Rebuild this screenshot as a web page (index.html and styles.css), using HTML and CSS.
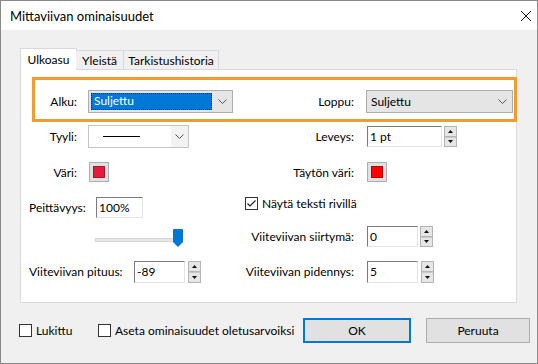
FILE: index.html
```html
<!DOCTYPE html>
<html lang="fi">
<head>
<meta charset="utf-8">
<title>Mittaviivan ominaisuudet</title>
<link rel="stylesheet" href="styles.css">
</head>
<body>
<div class="window">
  <div class="titlebar">
    <span class="title">Mittaviivan ominaisuudet</span>
    <svg class="close" width="12" height="12" viewBox="0 0 12 12"><path d="M1 1L11 11M11 1L1 11" stroke="#111" stroke-width="1" fill="none"/></svg>
  </div>
  <div class="content">
    <div class="tabs">
      <div class="tab active tab-ulkoasu">Ulkoasu</div>
      <div class="tab tab-yleista">Yleistä</div>
      <div class="tab tab-hist">Tarkistushistoria</div>
    </div>
    <div class="panel">
      <div class="highlight">
        <div class="hl-left">
          <span class="label lbl-alku">Alku:</span>
          <div class="combo combo-alku">
            <span class="combo-sel">Suljettu</span>
            <span class="chev"><svg width="9" height="5" viewBox="0 0 9 5"><path d="M0.5 0.5L4.5 4.5L8.5 0.5" stroke="#555" fill="none"/></svg></span>
          </div>
        </div>
        <div class="rcell">
          <span class="label lbl-right">Loppu:</span>
          <div class="combo combo-loppu">
            <span class="combo-text">Suljettu</span>
            <span class="chev"><svg width="9" height="5" viewBox="0 0 9 5"><path d="M0.5 0.5L4.5 4.5L8.5 0.5" stroke="#555" fill="none"/></svg></span>
          </div>
        </div>
      </div>

      <div class="row row-tyyli">
        <div class="lcell">
          <span class="label lbl-left">Tyyli:</span>
          <div class="combo combo-tyyli">
            <span class="line-sample"></span>
            <span class="chev chev-light"><svg width="9" height="5" viewBox="0 0 9 5"><path d="M0.5 0.5L4.5 4.5L8.5 0.5" stroke="#555" fill="none"/></svg></span>
          </div>
        </div>
        <div class="rcell">
          <span class="label lbl-right">Leveys:</span>
          <div class="input input-leveys">1 pt</div>
          <div class="spin">
            <div class="spin-btn"><svg width="5" height="3" viewBox="0 0 5 3"><path d="M2.5 0L5 3H0Z" fill="#111"/></svg></div>
            <div class="spin-btn"><svg width="5" height="3" viewBox="0 0 5 3"><path d="M0 0H5L2.5 3Z" fill="#111"/></svg></div>
          </div>
        </div>
      </div>

      <div class="row row-vari">
        <div class="lcell">
          <span class="label lbl-left">Väri:</span>
          <div class="swatch swatch-left"><span class="swatch-inner crimson"></span></div>
        </div>
        <div class="rcell">
          <span class="label lbl-right">Täytön väri:</span>
          <div class="swatch swatch-right"><span class="swatch-inner red"></span></div>
        </div>
      </div>

      <div class="row row-peitt">
        <div class="lcell lcell-free">
          <span class="label lbl-peitt">Peittävyys:</span>
          <div class="input input-peitt">100%</div>
        </div>
        <div class="rcell rcell-check">
          <span class="checkbox"><svg width="11" height="11" viewBox="0 0 11 11"><path d="M1.5 5.5L4 8L9.5 2.5" stroke="#222" stroke-width="1.2" fill="none"/></svg></span>
          <span class="check-text">Näytä teksti rivillä</span>
        </div>
      </div>

      <div class="row row-slider">
        <div class="lcell lcell-slider">
          <div class="slider">
            <div class="track"></div>
            <svg class="thumb" width="10" height="18" viewBox="0 0 10 18"><path d="M0 1Q0 0 1 0H9Q10 0 10 1V13L5 18L0 13Z" fill="#0078d7"/></svg>
          </div>
        </div>
        <div class="rcell">
          <span class="label lbl-right">Viiteviivan siirtymä:</span>
          <div class="input input-small">0</div>
          <div class="spin">
            <div class="spin-btn"><svg width="5" height="3" viewBox="0 0 5 3"><path d="M2.5 0L5 3H0Z" fill="#111"/></svg></div>
            <div class="spin-btn"><svg width="5" height="3" viewBox="0 0 5 3"><path d="M0 0H5L2.5 3Z" fill="#111"/></svg></div>
          </div>
        </div>
      </div>

      <div class="row row-pituus">
        <div class="lcell lcell-free">
          <span class="label lbl-pituus">Viiteviivan pituus:</span>
          <div class="input input-small input-tall">-89</div>
          <div class="spin spin-tall">
            <div class="spin-btn"><svg width="5" height="3" viewBox="0 0 5 3"><path d="M2.5 0L5 3H0Z" fill="#111"/></svg></div>
            <div class="spin-btn"><svg width="5" height="3" viewBox="0 0 5 3"><path d="M0 0H5L2.5 3Z" fill="#111"/></svg></div>
          </div>
        </div>
        <div class="rcell">
          <span class="label lbl-right">Viiteviivan pidennys:</span>
          <div class="input input-small input-tall">5</div>
          <div class="spin spin-tall">
            <div class="spin-btn"><svg width="5" height="3" viewBox="0 0 5 3"><path d="M2.5 0L5 3H0Z" fill="#111"/></svg></div>
            <div class="spin-btn"><svg width="5" height="3" viewBox="0 0 5 3"><path d="M0 0H5L2.5 3Z" fill="#111"/></svg></div>
          </div>
        </div>
      </div>
    </div>

    <div class="footer">
      <label class="fcheck fcheck-lukittu"><span class="checkbox"></span><span>Lukittu</span></label>
      <label class="fcheck fcheck-aseta"><span class="checkbox"></span><span>Aseta ominaisuudet oletusarvoiksi</span></label>
      <div class="btn btn-ok">OK</div>
      <div class="btn btn-cancel">Peruuta</div>
    </div>
  </div>
</div>
</body>
</html>
```

FILE: styles.css
```css
* { box-sizing: border-box; }
html, body { margin: 0; padding: 0; background: #ffffff; }
body {
  font-family: Lato, "Noto Sans", sans-serif;
  font-size: 12px;
  color: #000;
}

.window {
  width: 538px;
  height: 364px;
  border: 1px solid #8a8a8a;
  background: #f0f0f0;
  display: flex;
  flex-direction: column;
}

.titlebar {
  height: 29px;
  flex: none;
  background: #fff;
  display: flex;
  align-items: center;
  padding: 0 5px 0 9px;
}
.title { flex: 1; font-size: 13px; }
.close { display: block; }

.content {
  padding: 18px 0 0 19px;
}

/* tabs */
.tabs {
  display: flex;
  align-items: flex-end;
  height: 21px;
  position: relative;
  z-index: 1;
}
.tab {
  height: 19px;
  border: 1px solid #d9d9d9;
  border-bottom: none;
  background: #f0f0f0;
  display: flex;
  align-items: center;
  justify-content: center;
  padding-top: 1px;
}
.tab.active {
  height: 22px;
  margin-bottom: -1px;
  background: #fff;
  padding-top: 0;
  padding-bottom: 1px;
}
.tab-ulkoasu { width: 57px; }
.tab-yleista { width: 48px; margin-left: -1px; border-left: none; }
.tab-hist { width: 96px; margin-left: -1px; }

/* panel */
.panel {
  width: 497px;
  height: 234px;
  background: #fff;
  border: 1px solid #d9d9d9;
}

.label { display: inline-block; white-space: nowrap; }
.lbl-left { width: 56px; text-align: right; }
.lbl-right { width: 119px; text-align: right; margin-right: 13px; }
.lbl-alku { width: 42px; text-align: right; margin-right: 11px; }

.highlight {
  margin: 7px -1px 0 11px;
  height: 45px;
  border: 3px solid #f29b30;
  display: flex;
  align-items: flex-start;
  padding-top: 10px;
}
.hl-left { width: 200px; display: flex; align-items: center; }
.highlight .lbl-right { margin-right: 12px; }

.row { display: flex; align-items: center; }
.lcell { width: 214px; display: flex; align-items: center; }
.rcell { display: flex; align-items: center; }

/* combos */
.combo {
  height: 23px;
  border: 1px solid #adadad;
  background: #e5e5e5;
  display: flex;
  align-items: center;
}
.combo-alku { width: 145px; padding: 0 0 0 2px; }
.combo-sel {
  width: 121px;
  height: 17px;
  background: #0078d7;
  color: #fff;
  padding-left: 3px;
  line-height: 16px;
  outline: 1px dotted rgba(0, 0, 0, 0.55);
  outline-offset: -1px;
}
.combo-loppu { width: 147px; padding-left: 4px; }
.combo-text { flex: 1; }
.chev {
  width: 20px;
  height: 100%;
  margin-left: auto;
  display: flex;
  align-items: center;
  justify-content: center;
}
.chev svg { display: block; }
.combo-tyyli {
  width: 101px;
  margin-left: 11px;
  background: #fff;
  border-color: #c4c4c4;
  padding-left: 14px;
}
.chev-light {
  width: 17px;
  background: #f2f2f2;
}
.line-sample {
  width: 37px;
  height: 1px;
  background: #000;
}

.row-tyyli { margin-top: 3px; height: 23px; }

/* inputs */
.input {
  height: 21px;
  background: #fff;
  border: 1px solid;
  border-color: #7a7a7a #e3e3e3 #e3e3e3 #7a7a7a;
  padding-left: 2px;
  line-height: 19px;
  white-space: nowrap;
}
.input-leveys { width: 75px; }
.input-small { width: 51px; }
.input-tall { height: 22px; line-height: 20px; }
.input-peitt { width: 47px; }

.spin {
  width: 13px;
  height: 21px;
  margin-left: 2px;
  display: flex;
  flex-direction: column;
}
.spin-tall { height: 22px; margin-left: 3px; }
.spin-btn {
  flex: 1;
  border: 1px solid #b4b4b4;
  background: #e6e6e6;
  display: flex;
  align-items: center;
  justify-content: center;
}
.spin-btn + .spin-btn { border-top: 1px solid #c8c8c8; }
.spin-btn svg { display: block; }

/* colour swatches */
.row-vari { margin-top: 14px; height: 20px; }
.swatch {
  width: 20px;
  height: 20px;
  border: 1px solid #adadad;
  background: #e1e1e1;
  display: flex;
  align-items: center;
  justify-content: center;
}
.swatch-left { margin-left: 12px; }
.swatch-inner {
  width: 12px;
  height: 12px;
  border: 1px solid rgba(0, 0, 0, 0.25);
}
.crimson { background: #e31c3d; }
.red { background: #ff0000; }

/* opacity row */
.row-peitt { margin-top: 14px; height: 23px; }
.lcell-free { padding-left: 8px; }
.lbl-peitt { width: 67px; }
.rcell-check { align-self: flex-start; margin-left: 10px; height: 14px; }
.checkbox {
  width: 13px;
  height: 13px;
  border: 1px solid #333;
  background: #fff;
  display: flex;
  align-items: center;
  justify-content: center;
  flex: none;
}
.checkbox svg { display: block; }
.check-text { margin-left: 4px; }

/* slider */
.row-slider { margin-top: 6px; height: 23px; }
.lcell-slider { padding-left: 74px; height: 23px; }
.slider {
  position: relative;
  width: 88px;
  height: 23px;
}
.track {
  position: absolute;
  left: 0;
  top: 13px;
  width: 84px;
  height: 4px;
  background: #e7e7e7;
  border: 1px solid #d6d6d6;
}
.thumb {
  position: absolute;
  left: 78px;
  top: 4px;
  display: block;
}

/* length row */
.row-pituus { margin-top: 12px; height: 23px; }
.lbl-pituus { width: 105px; }

/* footer */
.footer {
  margin: 15px 0 0 -1px;
  height: 25px;
  display: flex;
  align-items: center;
}
.fcheck { display: flex; align-items: center; gap: 4px; white-space: nowrap; }
.fcheck-lukittu { width: 79px; }
.fcheck-aseta { width: 205px; }
.btn {
  height: 25px;
  background: #e1e1e1;
  display: flex;
  align-items: center;
  justify-content: center;
}
.btn-ok { width: 108px; border: 2px solid #0078d7; }
.btn-cancel { width: 104px; margin-left: 15px; border: 1px solid #adadad; }
```
